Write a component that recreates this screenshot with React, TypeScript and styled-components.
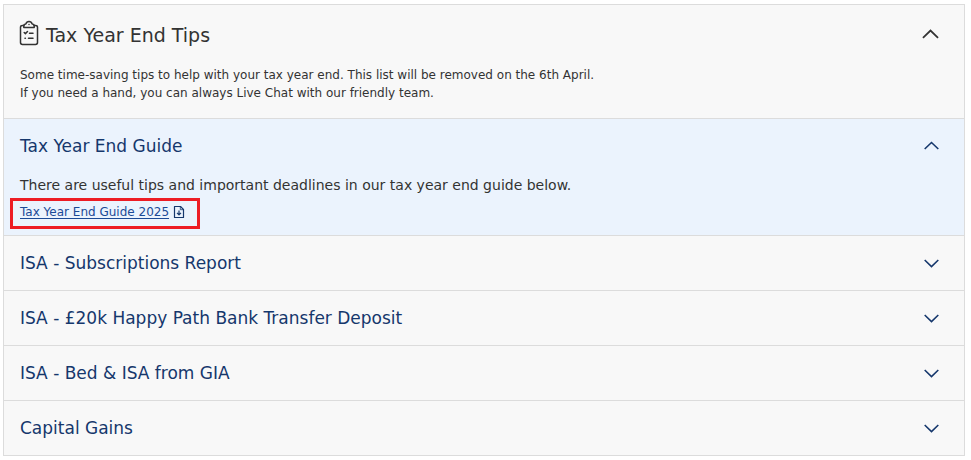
import React, { useState } from 'react';
import styled, { createGlobalStyle } from 'styled-components';

const GlobalStyle = createGlobalStyle`
  *, *::before, *::after { box-sizing: border-box; }
  body {
    margin: 0;
    background: #ffffff;
    color: #333333;
    font-family: Verdana, "DejaVu Sans", sans-serif;
  }
  h1, h2, p { margin: 0; font-weight: 400; }
`;

const Card = styled.main`
  margin: 4px 6px 4px 3px;
  border: 1px solid #dcdcdc;
  background: #f8f8f8;
`;

const CardHeader = styled.header`
  padding: 16px 0;
`;

const Title = styled.h1`
  font-size: 19px;
  line-height: 28px;
`;

const Toggle = styled.button`
  display: flex;
  align-items: center;
  gap: 7px;
  width: 100%;
  padding: 0 25px 0 16px;
  border: 0;
  background: none;
  color: inherit;
  font: inherit;
  text-align: left;
  cursor: pointer;
`;

const Label = styled.span`
  flex: 1;
`;

const Intro = styled.p`
  padding: 17px 16px 0;
  font-size: 12px;
  line-height: 18px;
`;

const Section = styled.section<{ $open: boolean }>`
  border-top: 1px solid #dcdcdc;
  background: ${(p) => (p.$open ? '#ebf3fd' : 'transparent')};
`;

const SectionTitle = styled.h2`
  color: #15376c;
  font-size: 17px;
  line-height: 22px;

  ${Toggle} {
    padding-top: 16px;
    padding-bottom: 16px;
  }
`;

const Panel = styled.div`
  padding: 1px 16px 14px;
`;

const PanelText = styled.p`
  font-size: 14px;
  line-height: 22px;
`;

const LinkLine = styled.div`
  position: relative;
  display: inline-flex;
  align-items: center;
  gap: 5px;
  margin-top: 7px;
  font-size: 12px;
  line-height: 18px;
`;

const Highlight = styled.span`
  position: absolute;
  inset: -5px -16px -8px -10px;
  border: 3px solid #ed1c24;
  pointer-events: none;
`;

const GuideLink = styled.a`
  color: #1b4a96;
  text-underline-offset: 2px;
`;

const Icon = styled.svg`
  display: block;
  flex: none;
  fill: none;
  stroke: currentColor;
  overflow: visible;
`;

const ClipboardIcon = () => (
  <Icon width="19" height="28" viewBox="0 0 19 28" strokeWidth="1.5" strokeLinecap="round" strokeLinejoin="round" aria-hidden="true">
    <path d="M4 4.5H2.6C1 4.5.5 5.2.5 6.2V21.6C.5 22.9 1 23.5 2.5 23.5H15.5C17 23.5 17.5 22.9 17.5 21.6V6.2C17.5 5.2 17 4.5 15.4 4.5H14" />
    <path d="M3.8 6.5V4.2C3.8 3.4 4.5 3.2 5.8 3C6.3 1.4 7.4.5 9 .5C10.6.5 11.7 1.4 12.2 3C13.5 3.2 14.2 3.4 14.2 4.2V6.5Z" />
    <path d="M9 3.4V3.6" />
    <path d="M4.2 11.5L5.4 12.6L7.5 10.5M9.5 12.2H13M5 17.2H5.4M8.5 17.2H13" />
  </Icon>
);

const DownloadIcon = () => (
  <Icon width="10" height="12" viewBox="0 0 10 12" strokeWidth="1.2" strokeLinejoin="round" color="#15376c" aria-hidden="true">
    <path d="M.5 .5H6.5L9.5 3.5V11.5H.5Z" />
    <path d="M6.3 .8V3.7H9.2" strokeWidth="0.8" />
    <path d="M5 4.5V9M3 6.8L5 8.8L7 6.8" />
  </Icon>
);

const Chevron = ({ open, large = false }: { open: boolean; large?: boolean }) => (
  <Icon width={large ? 17 : 15} height={large ? 10 : 9} viewBox="0 0 15 9" strokeWidth="1.6" aria-hidden="true">
    <path d={open ? 'M.7 7L7.5 .5L14.3 7' : 'M.7 1L7.5 7.6L14.3 1'} />
  </Icon>
);

const topics = [
  'Tax Year End Guide',
  'ISA - Subscriptions Report',
  'ISA - £20k Happy Path Bank Transfer Deposit',
  'ISA - Bed & ISA from GIA',
  'Capital Gains',
];

export default function App() {
  const [expanded, setExpanded] = useState(true);
  const [active, setActive] = useState<number | null>(0);

  return (
    <>
      <GlobalStyle />
      <Card>
        <CardHeader>
          <Title>
            <Toggle type="button" aria-expanded={expanded} onClick={() => setExpanded(!expanded)}>
              <ClipboardIcon />
              <Label>Tax Year End Tips</Label>
              <Chevron open={expanded} large />
            </Toggle>
          </Title>
          {expanded && (
            <Intro>
              Some time-saving tips to help with your tax year end. This list will be removed on the 6th April.
              <br />
              If you need a hand, you can always Live Chat with our friendly team.
            </Intro>
          )}
        </CardHeader>
        {expanded &&
          topics.map((topic, i) => (
            <Section key={topic} $open={active === i}>
              <SectionTitle>
                <Toggle type="button" aria-expanded={active === i} onClick={() => setActive(active === i ? null : i)}>
                  <Label>{topic}</Label>
                  <Chevron open={active === i} />
                </Toggle>
              </SectionTitle>
              {i === 0 && active === 0 && (
                <Panel>
                  <PanelText>There are useful tips and important deadlines in our tax year end guide below.</PanelText>
                  <LinkLine>
                    <GuideLink href="#tax-year-end-guide-2025">Tax Year End Guide 2025</GuideLink>
                    <DownloadIcon />
                    <Highlight />
                  </LinkLine>
                </Panel>
              )}
            </Section>
          ))}
      </Card>
    </>
  );
}
